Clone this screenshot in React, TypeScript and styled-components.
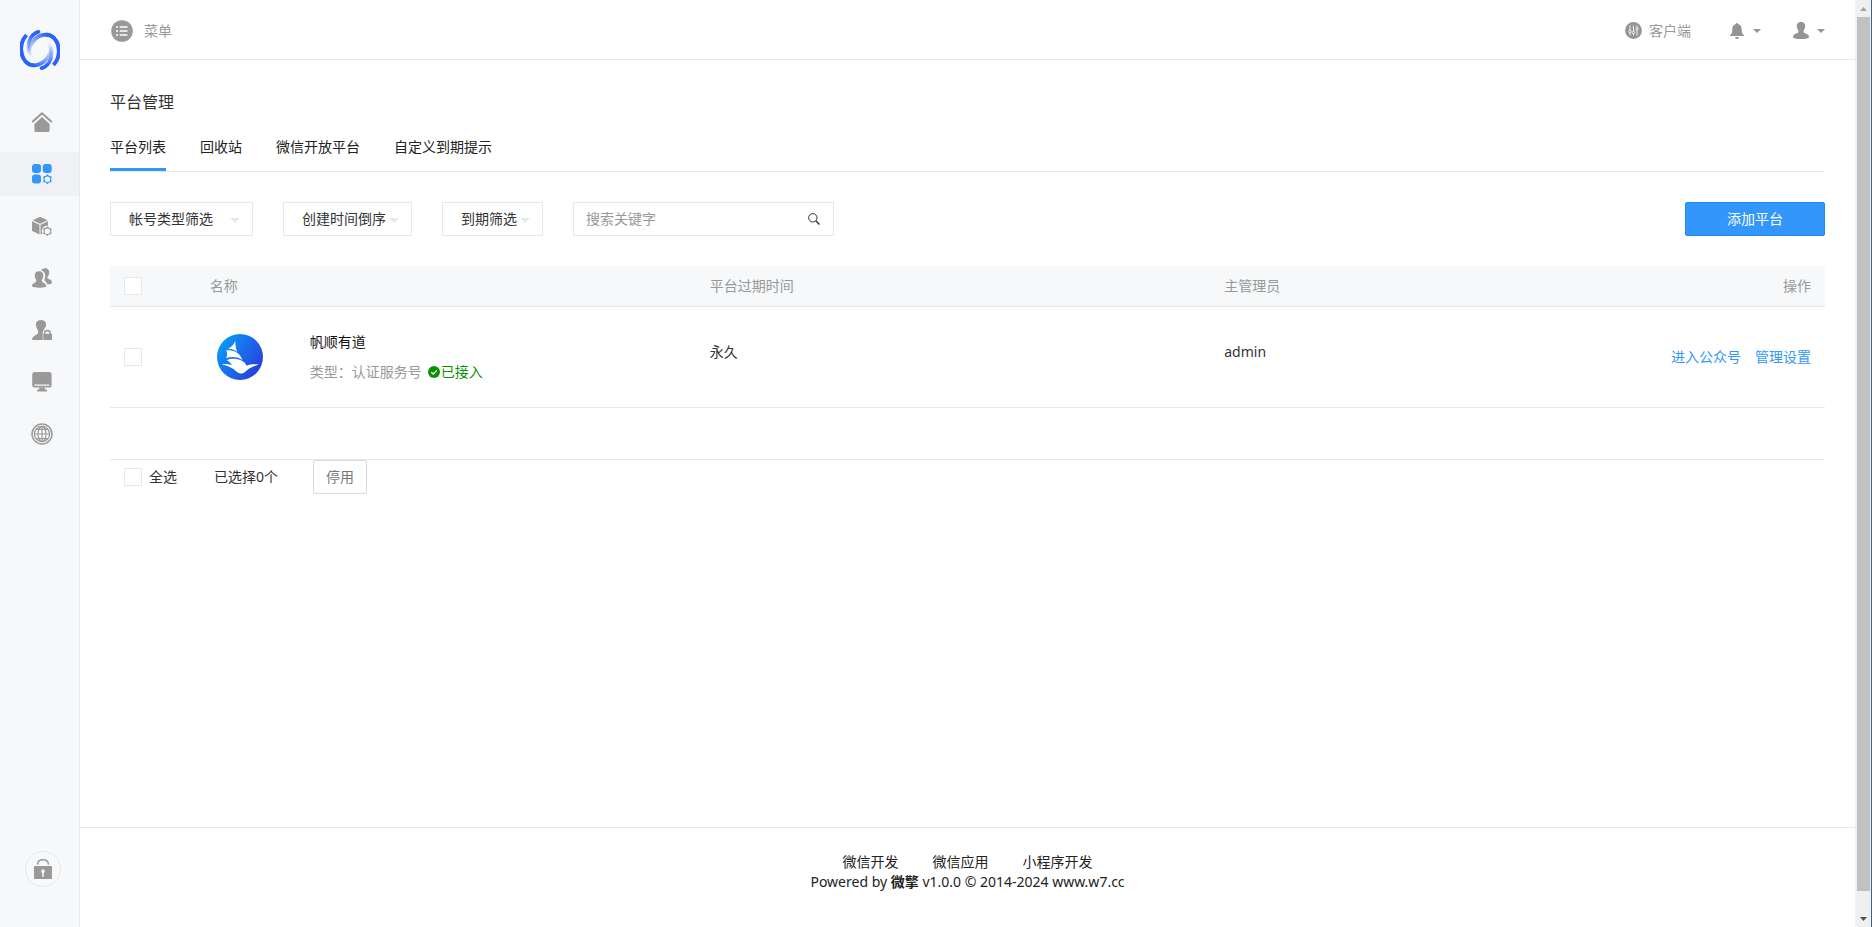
import React, { useState } from 'react';
import styled, { createGlobalStyle } from 'styled-components';

const BLUE = '#3296fa';
const LINE = '#e7e8eb';
const PALE = '#f6f8fa';
const GREY = '#999';

const GlobalStyle = createGlobalStyle`
  * { box-sizing: border-box; }
  body {
    margin: 0;
    background: #fff;
    color: #333;
    font: 14px/20px "Noto Sans", "Noto Sans CJK SC", sans-serif;
  }
  button, input, select { font: inherit; color: inherit; }
  a { color: inherit; text-decoration: none; }
  svg { display: block; flex: none; }
`;

/* ---------- frame ---------- */

const Page = styled.div`
  display: flex;
  min-height: 100vh;
`;

const Sidebar = styled.aside`
  display: flex;
  flex-direction: column;
  align-items: center;
  flex: none;
  width: 80px;
  padding: 30px 0 40px;
  background: ${PALE};
  border-right: 1px solid ${LINE};
`;

const SideNav = styled.nav`
  display: flex;
  flex-direction: column;
  gap: 8px;
  width: 100%;
  margin-top: 30px;
`;

const SideLink = styled.a<{ $active?: boolean }>`
  display: flex;
  align-items: center;
  height: 44px;
  padding-left: 32px;
  color: ${p => (p.$active ? BLUE : GREY)};
  background: ${p => (p.$active ? '#eff1f5' : 'transparent')};
`;

const LockButton = styled.button`
  display: flex;
  align-items: center;
  justify-content: center;
  width: 36px;
  height: 36px;
  margin: auto 0 0 7px;
  padding: 0;
  color: ${GREY};
  background: none;
  border: 1px solid ${LINE};
  border-radius: 50%;
`;

const Main = styled.div`
  display: flex;
  flex-direction: column;
  flex: 1;
  min-width: 0;
`;

const TopBar = styled.header`
  display: flex;
  align-items: center;
  justify-content: space-between;
  height: 60px;
  padding: 2px 30px 0 31px;
  border-bottom: 1px solid ${LINE};
  color: ${GREY};
`;

const TopGroup = styled.div`
  display: flex;
  align-items: center;
  gap: 32px;
`;

const TopButton = styled.button<{ $gap: number }>`
  display: flex;
  align-items: center;
  gap: ${p => p.$gap}px;
  padding: 0;
  background: none;
  border: 0;
`;

const ClientButton = styled(TopButton)`
  margin-right: 7px;
`;

const Content = styled.main`
  flex: 1;
  padding: 30px;
`;

const Title = styled.h1`
  margin: 0;
  font-size: 16px;
  line-height: 24px;
  font-weight: 400;
`;

const Tabs = styled.nav`
  display: flex;
  gap: 34px;
  height: 58px;
  border-bottom: 1px solid ${LINE};
`;

const Tab = styled.a<{ $active?: boolean }>`
  padding-top: 23px;
  color: #222;
  border-bottom: 3px solid ${p => (p.$active ? BLUE : 'transparent')};
`;

/* ---------- filters ---------- */

const FilterBar = styled.div`
  display: flex;
  gap: 30px;
  height: 34px;
  margin: 30px 0;
`;

const SelectBox = styled.span`
  position: relative;
  display: block;
`;

const FilterSelect = styled.select<{ $width: number }>`
  appearance: none;
  display: block;
  width: ${p => p.$width}px;
  height: 34px;
  padding: 0 0 0 18px;
  background: #fff;
  border: 1px solid ${LINE};
  border-radius: 0;
`;

const SelectCaret = styled.svg`
  position: absolute;
  top: 16px;
  right: 13px;
  pointer-events: none;
`;

const SearchForm = styled.form`
  display: flex;
  width: 261px;
  border: 1px solid ${LINE};
`;

const SearchInput = styled.input`
  flex: 1;
  min-width: 0;
  padding: 0 12px;
  background: none;
  border: 0;
  &::placeholder { color: ${GREY}; opacity: 1; }
`;

const SearchButton = styled.button`
  display: flex;
  align-items: center;
  padding: 0 13px;
  background: none;
  border: 0;
`;

const AddButton = styled.button`
  width: 140px;
  margin-left: auto;
  color: #fff;
  background: ${BLUE};
  border: 1px solid #198bfb;
  border-radius: 2px;
`;

/* ---------- table ---------- */

const Table = styled.table`
  width: 100%;
  table-layout: fixed;
  border-collapse: separate;
  border-spacing: 0;
`;

const HeadCell = styled.th<{ $right?: boolean }>`
  height: 41px;
  padding: 0 14px;
  font-weight: 400;
  text-align: ${p => (p.$right ? 'right' : 'left')};
  color: ${GREY};
  background: ${PALE};
  border-bottom: 1px solid ${LINE};
`;

const Cell = styled.td<{ $right?: boolean; $raised?: boolean }>`
  height: 101px;
  padding: ${p => (p.$raised ? '0 14px 10px' : '0 14px')};
  text-align: ${p => (p.$right ? 'right' : 'left')};
  border-bottom: 1px solid ${LINE};
`;

const Tick = styled.input`
  appearance: none;
  display: block;
  flex: none;
  width: 18px;
  height: 18px;
  margin: 0;
  background: #fff;
  border: 1px solid ${LINE};
  &:checked { background: ${BLUE}; border-color: ${BLUE}; }
`;

const Account = styled.div`
  display: flex;
  align-items: center;
  gap: 40px;
`;

const AvatarSlot = styled.div`
  display: flex;
  justify-content: center;
  width: 60px;
`;

const AccountText = styled.div`
  display: flex;
  flex-direction: column;
  gap: 10px;
  color: #111;
`;

const AccountType = styled.div`
  display: flex;
  align-items: center;
  color: ${GREY};
`;

const Linked = styled.span`
  display: flex;
  align-items: center;
  gap: 1px;
  margin-left: 6px;
  color: #0a9204;
`;

const Actions = styled.div`
  display: flex;
  justify-content: flex-end;
  gap: 14px;
  color: ${BLUE};
`;

const BatchBar = styled.div`
  display: flex;
  align-items: center;
  height: 35px;
  margin-top: 51px;
  padding-left: 14px;
  border-top: 1px solid ${LINE};
`;

const SelectAll = styled.label`
  display: flex;
  align-items: center;
  gap: 7px;
  width: 90px;
`;

const StopButton = styled.button`
  height: 34px;
  margin-left: 35px;
  padding: 0 12px;
  color: #777;
  background: #fff;
  border: 1px solid #d9dadc;
  border-radius: 2px;
`;

/* ---------- footer ---------- */

const Footer = styled.footer`
  height: 100px;
  padding-top: 24px;
  border-top: 1px solid ${LINE};
  text-align: center;
  color: #222;
`;

const FooterLinks = styled.nav`
  display: flex;
  justify-content: center;
  gap: 34px;
`;

const Powered = styled.p`
  margin: 0;
`;

/* ---------- scroll rail ---------- */

const Rail = styled.div`
  display: flex;
  flex-direction: column;
  align-items: center;
  flex: none;
  width: 17px;
  background: #f0f0f0;
  border-right: 1px solid #3c6288;
`;

const RailEnd = styled.div`
  display: flex;
  align-items: center;
  justify-content: center;
  height: 17px;
`;

const Thumb = styled.div`
  flex: 1;
  width: 13px;
  margin-bottom: 19px;
  background: #c1c1c1;
`;

/* ---------- drawings ---------- */

const Logo = () => (
  <svg width="40" height="40" viewBox="0 0 40 40" fill="none" strokeLinecap="round">
    <defs>
      <linearGradient id="sweep" gradientUnits="userSpaceOnUse" x1="14" y1="36" x2="31" y2="15">
        <stop offset="0" stopColor="#2962ff" />
        <stop offset="0.3" stopColor="#2962ff" stopOpacity="0.7" />
        <stop offset="1" stopColor="#2962ff" stopOpacity="0" />
      </linearGradient>
      <linearGradient id="wisp" gradientUnits="userSpaceOnUse" x1="18" y1="2" x2="9" y2="26">
        <stop offset="0.2" stopColor="#2962ff" />
        <stop offset="1" stopColor="#2962ff" stopOpacity="0" />
      </linearGradient>
      <g id="half">
        <path d="M6.5 5 C-2 14 1 27 6 32 C8 34 11 35.3 14 35.3 C24 35 32 26 31 14" stroke="url(#sweep)" strokeWidth="3.8" strokeLinecap="butt" />
        <path d="M6.5 5 C-2 14 1 27 6 32 C8 34 11 35.3 14 35.3" stroke="#2962ff" strokeWidth="3.8" strokeLinecap="butt" />
        <path d="M18.5 1.8 C12 4 8.3 10 8.3 17 C8.3 21 9 24 11 27" stroke="url(#wisp)" strokeWidth="3.6" />
      </g>
    </defs>
    <use href="#half" />
    <use href="#half" transform="rotate(180 20 20)" />
  </svg>
);

const SideIcon = ({ children }: { children: React.ReactNode }) => (
  <svg width="20" height="20" viewBox="0 0 20 20" fill="currentColor" overflow="visible" aria-hidden="true">{children}</svg>
);

const Hex = ({ halo }: { halo?: string }) => (
  <g>
    {halo && <circle cx="15.4" cy="15.2" r="5.6" fill={halo} />}
    <path
      fillRule="evenodd"
      d="M15.4 10.2 L17 11.8 L19.6 12.4 L19.2 15.2 L19.6 18 L17 18.6 L15.4 20.2 L13.8 18.6 L11.2 18 L11.6 15.2 L11.2 12.4 L13.8 11.8 Z M15.4 12.4 A2.8 2.8 0 1 0 15.4 18 A2.8 2.8 0 1 0 15.4 12.4 Z"
    />
  </g>
);

const HomeIcon = () => (
  <SideIcon>
    <path d="M.8 9.6 L10 1.2 L19.2 9.6" fill="none" stroke="currentColor" strokeWidth="2" strokeLinejoin="round" strokeLinecap="round" />
    <path d="M10 5 L17.6 12 V18.4 Q17.6 20 16 20 H4 Q2.4 20 2.4 18.4 V12 Z" />
  </SideIcon>
);

const PlatformIcon = () => (
  <SideIcon>
    <rect x="0" y="0" width="9" height="9" rx="3" />
    <rect x="10.7" y="0" width="9" height="9" rx="3" />
    <rect x="0" y="10.4" width="9" height="9" rx="3" />
    <Hex />
  </SideIcon>
);

const BoxIcon = () => (
  <SideIcon>
    <path d="M8 .8 L15.6 4.2 L8 7.8 L.6 4.2 Z" />
    <path d="M0 5.3 L7.5 8.8 V18.6 L.8 15.2 Q0 14.8 0 14 Z" />
    <path d="M16 5.3 L8.5 8.8 V18.6 L16 14.8 Z" />
    <Hex halo={PALE} />
  </SideIcon>
);

const UsersIcon = () => (
  <SideIcon>
    <path d="M13 .3 C16.4 .3 17.8 3 17 6 C16.6 7.6 15.5 8.4 15.5 9.6 C15.5 11.6 20 11 20 14.6 C20 16 18 16.3 15.5 16.4 C14.7 14 12.6 13.5 12.2 12 C13 10.5 13.5 9 13.1 6.8 C12.6 4 11 3 9.3 2.6 C9.9 1 11.3 .3 13 .3 Z" />
    <path d="M7 3.2 C10.5 3.2 11.8 5.8 11.2 8.9 C10.9 10.5 9.9 11.5 9.8 12.7 C9.7 15 14.2 14.4 14.2 18 C14.2 20.3 0 20.3 0 18 C0 14.4 4.5 15 4.3 12.7 C4.2 11.5 3.2 10.5 2.9 8.9 C2.3 5.8 3.6 3.2 7 3.2 Z" />
  </SideIcon>
);

const UserLockIcon = () => (
  <SideIcon>
    <path d="M9 0 C13 0 14.6 2.8 14 5.8 C13.6 7.8 11.8 9 11.4 11 C10.7 12 10.7 13 10.7 14 V20 H0 C0 15 6.2 15.2 6.3 12.2 C6.3 10 4.4 8.5 4 5.8 C3.5 2.8 5 0 9 0 Z" />
    <path d="M12.6 14 V12.8 C12.6 9.8 18.2 9.8 18.2 12.8 V14" fill="none" stroke="currentColor" strokeWidth="1.5" />
    <rect x="11.2" y="13.8" width="8.8" height="6.2" rx="1" />
  </SideIcon>
);

const ScreenIcon = () => (
  <SideIcon>
    <path fillRule="evenodd" d="M3 0 H17 Q19.6 0 19.6 2.6 V13 Q19.6 15.6 17 15.6 H3 Q.2 15.6 .2 13 V2.6 Q.2 0 3 0 Z M2.4 12.6 V13.7 H17.4 V12.6 Z" />
    <path d="M7.2 15.6 H12.8 V17.6 H15 V19.6 H5.2 V17.6 H7.2 Z" />
  </SideIcon>
);

const GlobeIcon = () => (
  <SideIcon>
    <g fill="none" stroke="currentColor">
      <circle cx="10" cy="10" r="10" strokeWidth="1.5" />
      <circle cx="10" cy="10" r="7.6" strokeWidth="1.3" />
      <ellipse cx="10" cy="10" rx="4" ry="7.6" strokeWidth="1.1" />
      <path d="M10 2.5 V17.5 M2.5 10 H17.5 M4.4 5.4 H15.6 M4.4 14.6 H15.6" strokeWidth="1.1" />
    </g>
  </SideIcon>
);

const LockIcon = () => (
  <svg width="18" height="20" viewBox="0 0 18 20" fill="currentColor" aria-hidden="true">
    <path d="M3.4 5.6 C4 -.8 14 -.8 14.6 5.6" fill="none" stroke="currentColor" strokeWidth="1.4" />
    <path fillRule="evenodd" d="M1 7 H17 Q18 7 18 8 V19 Q18 20 17 20 H1 Q0 20 0 19 V8 Q0 7 1 7 Z M9 10.3 A1.9 1.9 0 0 0 8.2 13.9 V17.7 H9.8 V13.9 A1.9 1.9 0 0 0 9 10.3 Z" />
  </svg>
);

const MenuIcon = () => (
  <svg width="22" height="22" viewBox="0 0 22 22" aria-hidden="true">
    <circle cx="11" cy="11" r="10.8" fill={GREY} />
    <path d="M5 7 H7 M8.7 7 H16.5 M5 11 H7 M8.7 11 H16.5 M5 15 H7 M8.7 15 H16.5" stroke="#fff" strokeWidth="1.7" />
  </svg>
);

const ClientIcon = () => (
  <svg width="17" height="17" viewBox="0 0 17 17" aria-hidden="true">
    <circle cx="8.5" cy="8.5" r="8.4" fill="#929699" />
    <path d="M5 3.6 V13.4 M8.5 3.6 V13.4 M12 3.6 V13.4" stroke="#fff" strokeWidth="0.9" />
    <g fill="#929699" stroke="#fff" strokeWidth="0.8">
      <circle cx="5" cy="9.4" r="1.2" />
      <circle cx="8.5" cy="10.6" r="1.2" />
      <circle cx="12" cy="6.8" r="1.2" />
    </g>
  </svg>
);

const BellIcon = () => (
  <svg width="14" height="16" viewBox="0 0 14 16" fill="#929699" aria-hidden="true">
    <path d="M7 0 Q8 0 8.1 1.1 C10.7 1.7 11.7 3.8 11.7 6.2 C11.7 9.5 12.2 10.8 14 12.2 V13 H0 V12.2 C1.8 10.8 2.3 9.5 2.3 6.2 C2.3 3.8 3.3 1.7 5.9 1.1 Q6 0 7 0 Z" />
    <path d="M5 14 H9 Q8.8 16 7 16 Q5.2 16 5 14 Z" />
  </svg>
);

const PersonIcon = () => (
  <svg width="16" height="17" viewBox="0 0 16 17" fill="#929699" aria-hidden="true">
    <path d="M8 0 C11.4 0 12.6 2.4 12.1 5.2 C11.8 6.9 10.5 8 10.4 9.5 C10.5 12 16 11.3 16 15 Q16 17 8 17 Q0 17 0 15 C0 11.3 5.5 12 5.6 9.5 C5.5 8 4.2 6.9 3.9 5.2 C3.4 2.4 4.6 0 8 0 Z" />
  </svg>
);

const TopCaret = () => (
  <svg width="8" height="4" viewBox="0 0 8 4" fill="#929699" aria-hidden="true"><path d="M0 0 H8 L4 4 Z" /></svg>
);

const SearchIcon = () => (
  <svg width="12" height="12" viewBox="0 0 12 12" fill="none" stroke="#333" aria-hidden="true">
    <circle cx="4.8" cy="4.8" r="4.2" />
    <path d="M7.8 7.8 L11.4 11.4" strokeWidth="1.4" />
  </svg>
);

const ShipAvatar = () => (
  <svg width="46" height="46" viewBox="0 0 46 46" role="img" aria-label="帆顺有道">
    <defs>
      <linearGradient id="sea" x1="0.05" y1="0.2" x2="0.95" y2="0.8">
        <stop offset="0" stopColor="#089bf8" />
        <stop offset="1" stopColor="#2b3cdc" />
      </linearGradient>
    </defs>
    <circle cx="23" cy="23" r="23" fill="url(#sea)" />
    <g fill="#fff">
      <path d="M18.4 7 C18.2 11 18.8 14.5 20.2 18 C17.5 15.8 14.5 14.8 11.2 14.8 C14.4 13 17 10.3 18.4 7 Z" />
      <path d="M9.2 16.2 C15.5 15.8 21 18 23 21.5 L25.6 26 C21 23 15 22.3 9.2 24 C10.4 21.5 10.4 19 9.2 16.2 Z" />
      <path d="M9.6 26.2 C16 23.4 23.5 25 27.4 28.5 C28.4 29.6 29 30.6 29.6 31.8 C33 30.2 37.4 30 41.6 30.4 C37 32.2 34 33 31.6 35 C29 37 27.2 39.6 23.6 39.6 C20.5 39.4 18.8 36.8 16 34.8 C13 32.6 9.5 31.4 4.8 30.4 C8.2 29.7 12 30 15 31.2 C13.6 28.8 12 27.2 9.6 26.2 Z" />
    </g>
  </svg>
);

const CheckIcon = () => (
  <svg width="12" height="12" viewBox="0 0 12 12" aria-hidden="true">
    <circle cx="6" cy="6" r="6" fill="#0a9204" />
    <path d="M3.3 6.2 L5.2 8 L8.8 4.4" fill="none" stroke="#fff" strokeWidth="1.3" />
  </svg>
);

/* ---------- page ---------- */

const SIDE_ITEMS = [
  { label: '首页', Icon: HomeIcon },
  { label: '平台', Icon: PlatformIcon, active: true },
  { label: '应用', Icon: BoxIcon },
  { label: '用户', Icon: UsersIcon },
  { label: '权限', Icon: UserLockIcon },
  { label: '系统', Icon: ScreenIcon },
  { label: '站点', Icon: GlobeIcon },
];

const TABS = ['平台列表', '回收站', '微信开放平台', '自定义到期提示'];

const FILTERS = [
  { label: '帐号类型筛选', width: 143 },
  { label: '创建时间倒序', width: 129 },
  { label: '到期筛选', width: 101 },
];

export default function App() {
  const [picked, setPicked] = useState(false);
  const toggle = () => setPicked(v => !v);

  return (
    <>
      <GlobalStyle />
      <Page>
        <Sidebar>
          <Logo />
          <SideNav>
            {SIDE_ITEMS.map(({ label, Icon, active }) => (
              <SideLink key={label} href="#" aria-label={label} $active={active}><Icon /></SideLink>
            ))}
          </SideNav>
          <LockButton type="button" aria-label="锁定"><LockIcon /></LockButton>
        </Sidebar>

        <Main>
          <TopBar>
            <TopButton type="button" $gap={11}><MenuIcon />菜单</TopButton>
            <TopGroup>
              <ClientButton type="button" $gap={7}><ClientIcon />客户端</ClientButton>
              <TopButton type="button" $gap={9} aria-label="消息"><BellIcon /><TopCaret /></TopButton>
              <TopButton type="button" $gap={8} aria-label="账户"><PersonIcon /><TopCaret /></TopButton>
            </TopGroup>
          </TopBar>

          <Content>
            <Title>平台管理</Title>
            <Tabs>
              {TABS.map((name, i) => <Tab key={name} href="#" $active={i === 0}>{name}</Tab>)}
            </Tabs>

            <FilterBar>
              {FILTERS.map(({ label, width }) => (
                <SelectBox key={label}>
                  <FilterSelect aria-label={label} $width={width}><option>{label}</option></FilterSelect>
                  <SelectCaret width="10" height="5" viewBox="0 0 10 5" fill={LINE}><path d="M0 0 H10 L5 5 Z" /></SelectCaret>
                </SelectBox>
              ))}
              <SearchForm onSubmit={e => e.preventDefault()}>
                <SearchInput aria-label="搜索关键字" placeholder="搜索关键字" />
                <SearchButton type="submit" aria-label="搜索"><SearchIcon /></SearchButton>
              </SearchForm>
              <AddButton type="button">添加平台</AddButton>
            </FilterBar>

            <Table>
              <colgroup>
                <col style={{ width: '5%' }} />
                <col style={{ width: 500 }} />
                <col style={{ width: '30%' }} />
                <col />
                <col style={{ width: 240 }} />
              </colgroup>
              <thead>
                <tr>
                  <HeadCell><Tick type="checkbox" aria-label="选择全部" checked={picked} onChange={toggle} /></HeadCell>
                  <HeadCell>名称</HeadCell>
                  <HeadCell>平台过期时间</HeadCell>
                  <HeadCell>主管理员</HeadCell>
                  <HeadCell $right>操作</HeadCell>
                </tr>
              </thead>
              <tbody>
                <tr>
                  <Cell><Tick type="checkbox" aria-label="选择帆顺有道" checked={picked} onChange={toggle} /></Cell>
                  <Cell>
                    <Account>
                      <AvatarSlot><ShipAvatar /></AvatarSlot>
                      <AccountText>
                        <div>帆顺有道</div>
                        <AccountType>类型：认证服务号<Linked><CheckIcon />已接入</Linked></AccountType>
                      </AccountText>
                    </Account>
                  </Cell>
                  <Cell $raised>永久</Cell>
                  <Cell $raised>admin</Cell>
                  <Cell $right>
                    <Actions><a href="#">进入公众号</a><a href="#">管理设置</a></Actions>
                  </Cell>
                </tr>
              </tbody>
            </Table>

            <BatchBar>
              <SelectAll><Tick type="checkbox" checked={picked} onChange={toggle} />全选</SelectAll>
              <span>已选择{picked ? 1 : 0}个</span>
              <StopButton type="button">停用</StopButton>
            </BatchBar>
          </Content>

          <Footer>
            <FooterLinks>
              <a href="#">微信开发</a>
              <a href="#">微信应用</a>
              <a href="#">小程序开发</a>
            </FooterLinks>
            <Powered>Powered by <b>微擎</b> v1.0.0 © 2014-2024 www.w7.cc</Powered>
          </Footer>
        </Main>

        <Rail aria-hidden="true">
          <RailEnd><svg width="7" height="4" viewBox="0 0 7 4" fill="#a3a3a3"><path d="M0 4 H7 L3.5 0 Z" /></svg></RailEnd>
          <Thumb />
          <RailEnd><svg width="7" height="4" viewBox="0 0 7 4" fill="#505050"><path d="M0 0 H7 L3.5 4 Z" /></svg></RailEnd>
        </Rail>
      </Page>
    </>
  );
}
